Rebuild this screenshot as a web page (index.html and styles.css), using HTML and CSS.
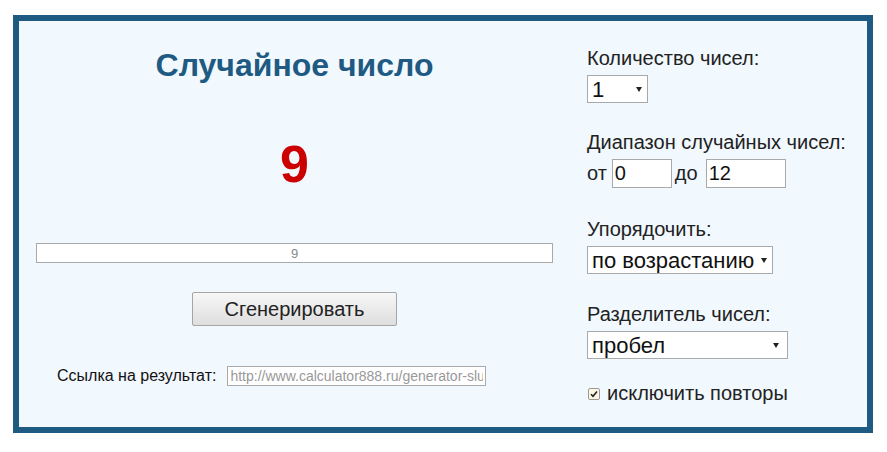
FILE: index.html
```html
<!DOCTYPE html>
<html>
<head>
<meta charset="utf-8">
<title>Генератор случайных чисел</title>
<link rel="stylesheet" href="styles.css">
</head>
<body>
<div class="frame">
    <div class="generator">

        <div class="main">
            <h1 class="title">Случайное число</h1>
            <div class="big-number">9</div>
            <input class="result" type="text" value="9" readonly>
            <button class="generate">Сгенерировать</button>
            <div class="link-row">
                <span>Ссылка на результат:</span>
                <input class="link" type="text" value="http://www.calculator888.ru/generator-sluchaynyh-chisel/" readonly>
            </div>
        </div>

        <div class="options">
            <div class="field field-count">
                <div class="field-label">Количество чисел:</div>
                <span class="select-wrap">
                    <select class="sel-count">
                        <option>1</option>
                        <option>2</option>
                        <option>5</option>
                        <option>10</option>
                    </select>
                </span>
            </div>

            <div class="field field-range">
                <div class="field-label">Диапазон случайных чисел:</div>
                <div class="range-row">
                    <span>от</span>
                    <input class="num num-from" type="text" value="0">
                    <span>до</span>
                    <input class="num num-to" type="text" value="12">
                </div>
            </div>

            <div class="field field-order">
                <div class="field-label">Упорядочить:</div>
                <span class="select-wrap">
                    <select class="sel-order">
                        <option>по возрастанию</option>
                        <option>по убыванию</option>
                        <option>не упорядочивать</option>
                    </select>
                </span>
            </div>

            <div class="field field-sep">
                <div class="field-label">Разделитель чисел:</div>
                <span class="select-wrap wide-arrow">
                    <select class="sel-sep">
                        <option>пробел</option>
                        <option>запятая</option>
                        <option>новая строка</option>
                    </select>
                </span>
            </div>

            <label class="check-row">
                <span class="check-box">
                    <svg width="8" height="8" viewBox="0 0 8 8"><path d="M1 4.2 L3 6.3 L7 1.5" fill="none" stroke="#222" stroke-width="1.6"/></svg>
                </span>
                исключить повторы
            </label>
        </div>

    </div>
</div>
</body>
</html>
```

FILE: styles.css
```css
body {
    margin: 0;
    background: #fff;
    font-family: "Liberation Sans", Arial, sans-serif;
    color: #222;
}

.frame {
    padding: 15px 0 0 13px;
}

.generator {
    display: flex;
    width: 860px;
    height: 418px;
    box-sizing: border-box;
    border: 6px solid #1d5b83;
    background-color: #f1f8fe;
}

/* left part */
.main {
    width: 517px;
    margin-left: 17px;
    display: flex;
    flex-direction: column;
    align-items: center;
}

.title {
    margin: 26px 0 0;
    font-size: 32px;
    line-height: 36px;
    font-weight: bold;
    color: #1e5a82;
}

.big-number {
    margin-top: 51px;
    font-size: 52px;
    line-height: 60px;
    font-weight: bold;
    color: #cc0000;
}

.result {
    margin-top: 49px;
    width: 100%;
    height: 20px;
    box-sizing: border-box;
    padding: 0;
    border: 1px solid #a9a9a9;
    background: #fff;
    text-align: center;
    font-family: inherit;
    font-size: 13px;
    color: #888;
}

.generate {
    margin-top: 29px;
    width: 205px;
    height: 34px;
    border: 1px solid #a5a5a5;
    border-radius: 2px;
    background: linear-gradient(#f7f7f7, #dedede);
    font-family: inherit;
    font-size: 20px;
    color: #222;
    cursor: pointer;
}

.link-row {
    align-self: flex-start;
    margin: 40px 0 0 21px;
    display: flex;
    align-items: center;
    gap: 11px;
    font-size: 16px;
    color: #111;
}

.link {
    width: 259px;
    height: 20px;
    box-sizing: border-box;
    padding: 0 2px;
    border: 1px solid #aaa;
    background: #fff;
    font-family: inherit;
    font-size: 14px;
    color: #999;
}

/* right part */
.options {
    margin-left: 34px;
    padding-top: 26px;
    font-size: 20px;
}

.field-label {
    line-height: 23px;
    margin-bottom: 5px;
}

.field-range {
    margin-top: 28px;
}

.field-order {
    margin-top: 30px;
}

.field-sep {
    margin-top: 29px;
}

.select-wrap {
    position: relative;
    display: inline-block;
}

.select-wrap select {
    -webkit-appearance: none;
    appearance: none;
    height: 28px;
    box-sizing: border-box;
    padding: 0 8px 0 4px;
    border: 1px solid #a9a9a9;
    border-radius: 0;
    background: #fff;
    font-family: inherit;
    font-size: 22px;
    color: #111;
}

.select-wrap::after {
    content: "";
    position: absolute;
    right: 6px;
    top: 12px;
    border-left: 3px solid transparent;
    border-right: 3px solid transparent;
    border-top: 5px solid #222;
    pointer-events: none;
}

.wide-arrow::after {
    right: 9px;
}

.sel-count { width: 61px; }
.sel-order { width: 186px; }
.sel-sep { width: 201px; }

.range-row {
    display: flex;
    align-items: center;
    height: 29px;
}

.num {
    height: 29px;
    box-sizing: border-box;
    padding: 0 2px;
    border: 1px solid #a9a9a9;
    background: #fff;
    font-family: inherit;
    font-size: 20px;
    color: #111;
}

.num-from {
    width: 60px;
    margin: 0 3px 0 5px;
}

.num-to {
    width: 80px;
    margin-left: 8px;
}

.check-row {
    display: flex;
    align-items: center;
    gap: 7px;
    margin-top: 23px;
    line-height: 23px;
}

.check-box {
    display: flex;
    align-items: center;
    justify-content: center;
    width: 12px;
    height: 12px;
    margin-left: 1px;
    box-sizing: border-box;
    border: 1px solid #999;
    border-radius: 2px;
    background: #fdf7e2;
}
```
